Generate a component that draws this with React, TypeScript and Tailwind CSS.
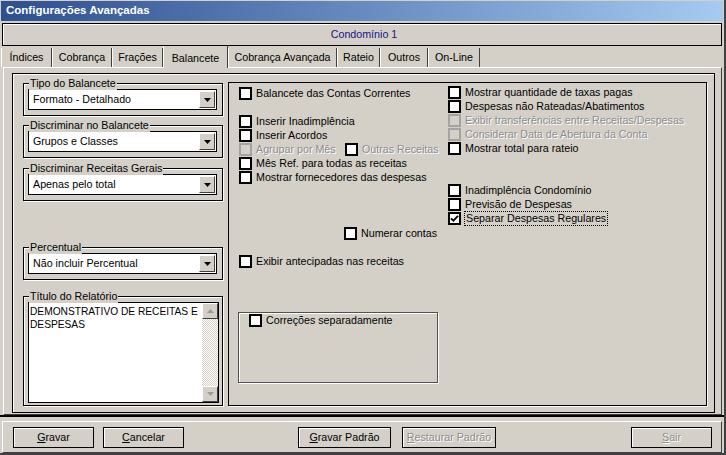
import type { ReactNode } from "react";

const disabledText = "text-[#8c8c8c] [text-shadow:1px_1px_0_#ffffff]";

function Box({ checked = false, disabled = false }: { checked?: boolean; disabled?: boolean }) {
  return (
    <span
      className={`flex h-[13px] w-[13px] shrink-0 items-center justify-center border-2 ${
        disabled ? "border-[#a3a3a3] bg-[#d4d0c8]" : "border-black bg-white"
      }`}
    >
      {checked && (
        <svg width="9" height="9" viewBox="0 0 9 9">
          <path d="M1 4.3 L3.4 6.7 L8 1.9" fill="none" stroke="#000" strokeWidth="1.8" />
        </svg>
      )}
    </span>
  );
}

function Check({
  label,
  checked,
  disabled,
  boxDisabled,
  focus,
  className = "",
}: {
  label: string;
  checked?: boolean;
  disabled?: boolean;
  boxDisabled?: boolean;
  focus?: boolean;
  className?: string;
}) {
  return (
    <div className={`flex h-[14px] items-center ${className}`}>
      <Box checked={checked} disabled={boxDisabled ?? disabled} />
      <span
        className={`ml-[4px] whitespace-nowrap leading-[13px] ${disabled ? disabledText : ""} ${
          focus ? "px-[1px] outline-1 outline-dotted outline-black" : ""
        }`}
      >
        {label}
      </span>
    </div>
  );
}

function Group({ title, className = "", children }: { title: string; className?: string; children: ReactNode }) {
  return (
    <div className={`relative border border-black shadow-[1px_1px_0_#fff,inset_1px_1px_0_#fff] ${className}`}>
      <span className="absolute -top-[7px] left-[5px] bg-[#d4d0c8] px-[1px] leading-[13px]">{title}</span>
      {children}
    </div>
  );
}

function Combo({ value }: { value: string }) {
  return (
    <div className="ml-[4px] mt-[5px] flex h-[21px] w-[189px] items-center border border-black bg-white pl-[4px] pr-[1px]">
      <span className="flex-1 whitespace-nowrap">{value}</span>
      <span className="flex h-[17px] w-[16px] items-center justify-center border border-b-[#404040] border-l-white border-r-[#404040] border-t-white bg-[#d4d0c8]">
        <svg width="7" height="4" viewBox="0 0 7 4">
          <path d="M0 0h7L3.5 4z" fill="#000" />
        </svg>
      </span>
    </div>
  );
}

function ScrollBtn({ up }: { up?: boolean }) {
  return (
    <span className="flex h-[16px] w-[16px] items-center justify-center border border-b-[#404040] border-l-white border-r-[#404040] border-t-white bg-[#d4d0c8]">
      <svg width="7" height="4" viewBox="0 0 7 4">
        <path d={up ? "M0 4h7L3.5 0z" : "M0 0h7L3.5 4z"} fill="#9a9a9a" />
      </svg>
    </span>
  );
}

function Btn({ label, disabled, className = "" }: { label: string; disabled?: boolean; className?: string }) {
  return (
    <button
      className={`flex h-[21px] items-center justify-center border border-black bg-[#d4d0c8] text-[10.7px] shadow-[inset_1px_1px_0_#fff] ${
        disabled ? disabledText : "text-black"
      } ${className}`}
    >
      <span>
        <u>{label[0]}</u>
        {label.slice(1)}
      </span>
    </button>
  );
}

const tabs = [
  { name: "Índices", w: "w-[51px]" },
  { name: "Cobrança", w: "w-[60px]" },
  { name: "Frações", w: "w-[51px]" },
  { name: "Balancete", w: "w-[65px]", active: true },
  { name: "Cobrança Avançada", w: "w-[109px]" },
  { name: "Rateio", w: "w-[43px]" },
  { name: "Outros", w: "w-[48px]" },
  { name: "On-Line", w: "w-[52px]" },
];

export default function App() {
  return (
    <div className="flex h-[455px] w-[726px] flex-col overflow-hidden border-b-2 border-r-2 border-[#404040] bg-[#d4d0c8] font-['Liberation_Sans',Arial,sans-serif] text-[10.7px] text-black">
      {/* title */}
      <div className="mx-[1px] mt-[1px] flex h-[20px] items-center bg-linear-to-r from-[#2f4f8f] to-[#a6caf0] pl-[5px] text-[11.5px] font-bold text-white">
        Configurações Avançadas
      </div>

      {/* condominio */}
      <div className="mx-[2px] mt-[2px] flex h-[23px] items-center justify-center border border-black pl-[4px] text-[#14148c] shadow-[inset_1px_1px_0_#fff]">
        Condomínio 1
      </div>

      {/* tabs */}
      <div className="flex h-[21px] items-end pl-[1px]">
        {tabs.map((t) =>
          t.active ? (
            <div
              key={t.name}
              className={`relative z-10 -mb-[1px] flex h-[22px] items-start justify-center border-l border-r border-l-white border-r-[#404040] bg-[#d4d0c8] pt-[4px] ${t.w}`}
            >
              {t.name}
            </div>
          ) : (
            <div
              key={t.name}
              className={`flex h-[19px] items-center justify-center border-l border-r border-l-white border-r-[#404040] ${t.w}`}
            >
              {t.name}
            </div>
          )
        )}
      </div>

      {/* tab page */}
      <div className="ml-[3px] h-[348px] w-[719px] border border-b-[#404040] border-l-white border-r-[#404040] border-t-white">
        <div className="ml-[8px] mt-[5px] flex h-[340px] w-[703px] border border-black shadow-[inset_1px_1px_0_#fff]">
          {/* left column */}
          <div className="ml-[10px] mt-[9px] flex w-[200px] flex-col">
            <Group title="Tipo do Balancete" className="h-[33px]">
              <Combo value="Formato - Detalhado" />
            </Group>
            <Group title="Discriminar no Balancete" className="mt-[9px] h-[33px]">
              <Combo value="Grupos e Classes" />
            </Group>
            <Group title="Discriminar Receitas Gerais" className="mt-[10px] h-[33px]">
              <Combo value="Apenas pelo total" />
            </Group>
            <Group title="Percentual" className="mt-[46px] h-[33px]">
              <Combo value="Não incluir Percentual" />
            </Group>
            <Group title="Título do Relatório" className="mt-[16px] h-[110px]">
              <div className="ml-[4px] mt-[5px] flex h-[101px] w-[191px] border border-black bg-white">
                <div className="min-w-0 flex-1 overflow-hidden whitespace-nowrap pl-[1px] pt-[2px] text-[10.2px] leading-[13px]">
                  DEMONSTRATIVO DE RECEITAS E
                  <br />
                  DESPESAS
                </div>
                <div className="flex w-[16px] shrink-0 flex-col justify-between bg-[repeating-conic-gradient(#d4d0c8_0_25%,#ffffff_0_50%)] bg-[length:2px_2px]">
                  <ScrollBtn up />
                  <ScrollBtn />
                </div>
              </div>
            </Group>
          </div>

          {/* right panel */}
          <div className="ml-[5px] mt-[8px] flex h-[324px] w-[479px] flex-col border border-black shadow-[1px_1px_0_#fff]">
            <div className="flex">
              <div className="ml-[10px] w-[209px] pt-[3px]">
                <Check label="Balancete das Contas Correntes" />
                <Check label="Inserir Inadimplência" className="mt-[14px]" />
                <Check label="Inserir Acordos" />
                <div className="flex h-[14px] items-center">
                  <Check label="Agrupar por Mês" disabled className="w-[106px]" />
                  <Check label="Outras Receitas" disabled boxDisabled={false} />
                </div>
                <Check label="Mês Ref. para todas as receitas" />
                <Check label="Mostrar fornecedores das despesas" />
              </div>
              <div className="pt-[2px]">
                <Check label="Mostrar quantidade de taxas pagas" />
                <Check label="Despesas não Rateadas/Abatimentos" />
                <Check label="Exibir transferências entre Receitas/Despesas" disabled />
                <Check label="Considerar Data de Abertura da Conta" disabled />
                <Check label="Mostrar total para rateio" />
                <Check label="Inadimplência Condomínio" className="mt-[28px]" />
                <Check label="Previsão de Despesas" />
                <Check label="Separar Despesas Regulares" checked focus />
              </div>
            </div>
            <Check label="Numerar contas" className="ml-[115px] mt-[1px]" />
            <Check label="Exibir antecipadas nas receitas" className="ml-[10px] mt-[14px]" />
            <div className="ml-[9px] mt-[44px] h-[71px] w-[200px] border border-[#505050] shadow-[inset_1px_1px_0_#fff,1px_1px_0_#fff]">
              <Check label="Correções separadamente" className="ml-[10px]" />
            </div>
          </div>
        </div>
      </div>

      {/* buttons */}
      <div className="flex-1 border-t-2 border-t-black">
        <div className="mx-[2px] mt-[4px] flex h-[32px] items-start border border-b-[#404040] border-l-white border-r-[#404040] border-t-white pt-[5px]">
          <Btn label="Gravar" className="ml-[10px] w-[81px]" />
          <Btn label="Cancelar" className="ml-[9px] w-[81px]" />
          <Btn label="Gravar Padrão" className="ml-[114px] w-[93px]" />
          <Btn label="Restaurar Padrão" disabled className="ml-[11px] w-[94px]" />
          <Btn label="Sair" disabled className="ml-[135px] w-[81px]" />
        </div>
      </div>
    </div>
  );
}
